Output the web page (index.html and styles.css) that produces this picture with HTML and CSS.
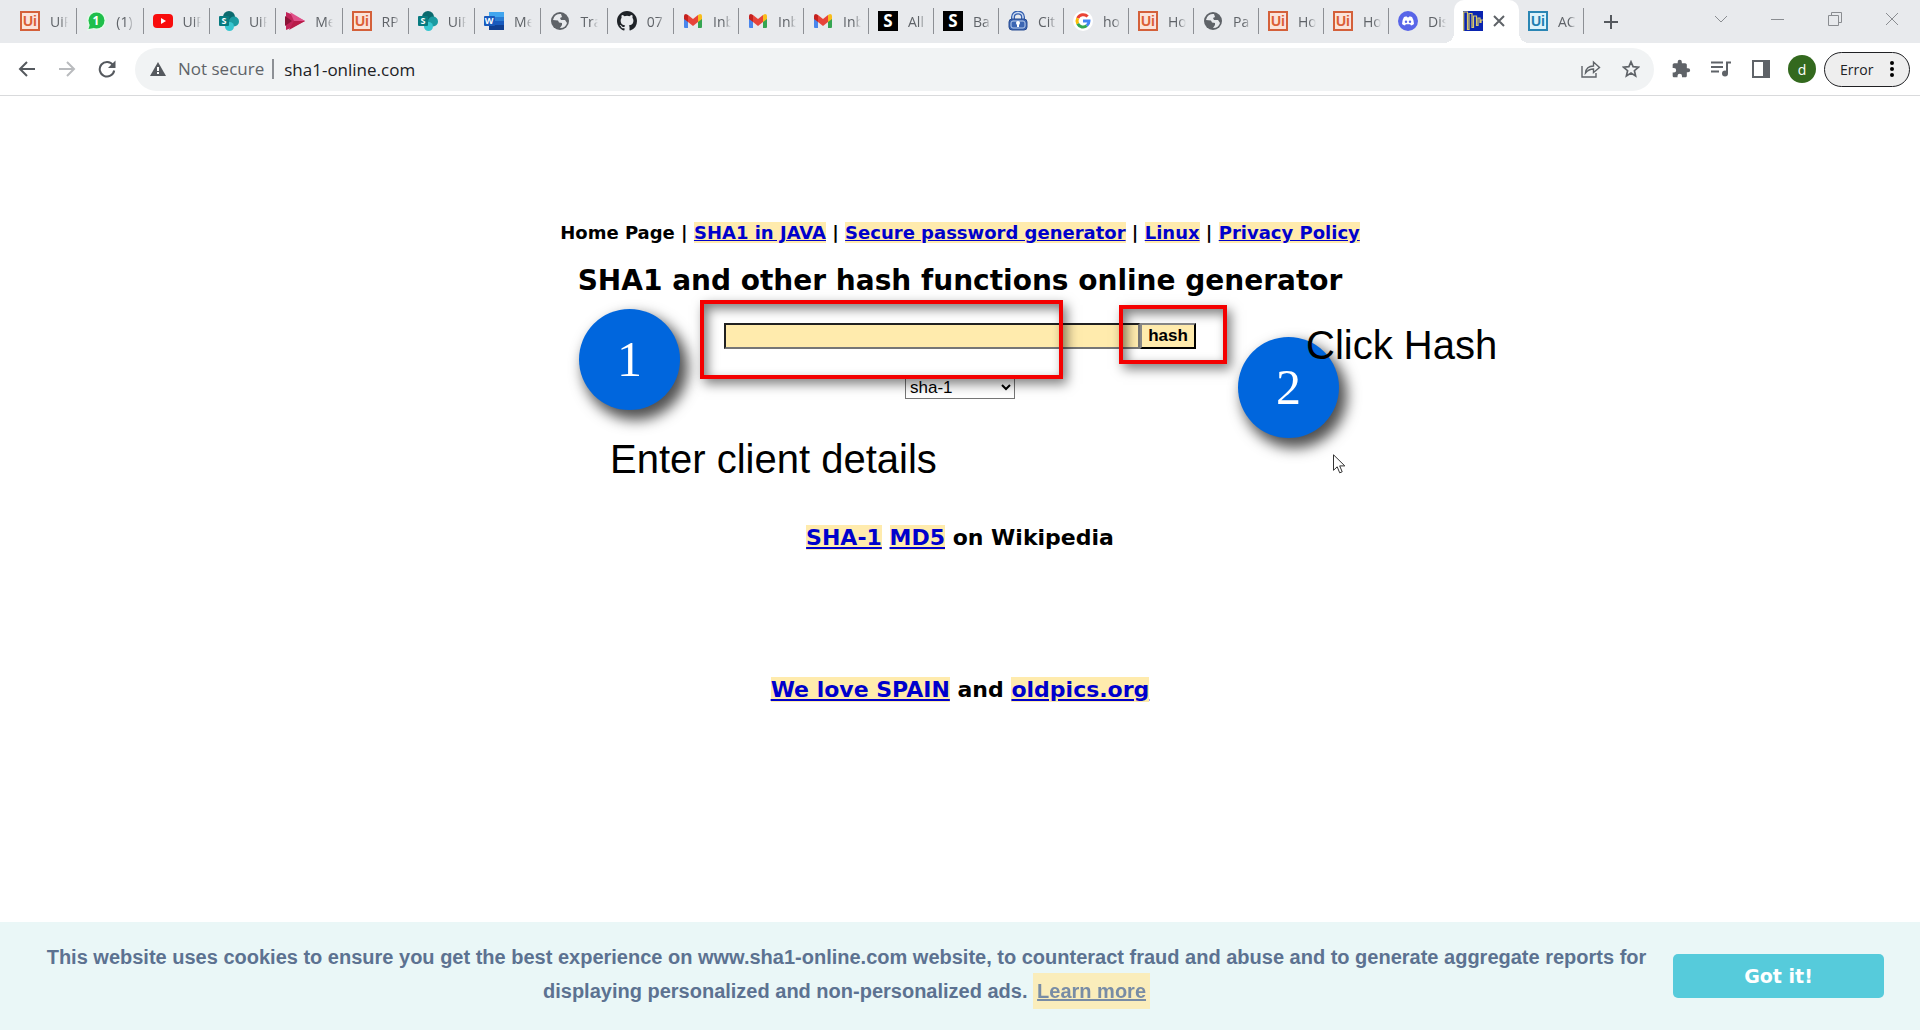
FILE: index.html
```html
<!DOCTYPE html>
<html lang="en">
<head>
<meta charset="utf-8">
<title>SHA1 and other hash functions online generator</title>
<link rel="stylesheet" href="styles.css">
</head>
<body>
<svg class="sprite" aria-hidden="true">
  <symbol id="uipath" viewBox="0 0 20 20"><rect width="20" height="20" fill="#d4603a"/><rect x="2" y="2" width="16" height="16" fill="#fbe3da"/><text x="10" y="15" text-anchor="middle" class="logo-ui" fill="#dc5f36">Ui</text></symbol>
  <symbol id="uipath-blue" viewBox="0 0 20 20"><rect width="20" height="20" fill="#2a86b4"/><rect x="2" y="2" width="16" height="16" fill="#dcf3fb"/><text x="10" y="15" text-anchor="middle" class="logo-ui" fill="#1f7fb0">Ui</text></symbol>
  <symbol id="whatsapp" viewBox="0 0 20 20"><circle cx="10.500" cy="9.500" r="9.500" fill="#e4fbe9"/><path d="M1 20l2-6 4 4z" fill="#e4fbe9"/><circle cx="10.500" cy="9.500" r="8" fill="#1fbf4b"/><path d="M2.500 18l1.500-5 4 4z" fill="#1fbf4b"/><text x="10" y="14" text-anchor="middle" class="logo-one" fill="#fff">1</text></symbol>
  <symbol id="youtube" viewBox="0 0 20 20"><rect y="3" width="20" height="14" rx="4" fill="#f80d0d"/><path d="M8 7l5 3-5 3z" fill="#fff"/></symbol>
  <symbol id="sharepoint" viewBox="0 0 20 20"><circle cx="10" cy="6" r="6" fill="#0b6a6e"/><circle cx="15" cy="10.500" r="5" fill="#1b9ba1"/><circle cx="10.500" cy="15.500" r="4.500" fill="#37c6d0"/><rect y="5" width="10" height="10" rx="1" fill="#087b80"/><text x="5" y="13" text-anchor="middle" class="logo-s" fill="#fff">S</text></symbol>
  <symbol id="stream" viewBox="0 0 20 20"><path d="M1 1l5 2 14 7-14 7-5 2z" fill="#c2245a"/><path d="M5 1l15 9H9z" fill="#e0518a"/><path d="M0 5l7 5-7 5z" fill="#8b1538"/><path d="M4 19l5-9h11z" fill="#b81c49"/></symbol>
  <symbol id="word" viewBox="0 0 20 20"><rect x="5" y="1" width="15" height="18" rx="1" fill="#2b7cd3"/><path d="M5 1h15v5H5z" fill="#41a5ee"/><path d="M5 10h15v4H5z" fill="#185abd"/><path d="M5 14h15v5H5z" fill="#103f91"/><rect y="5" width="11" height="10" rx="1" fill="#185abd"/><text x="5" y="13" text-anchor="middle" class="logo-s" fill="#fff">W</text></symbol>
  <symbol id="globe" viewBox="0 0 20 20"><circle cx="10" cy="10" r="9" fill="#5f6368"/><path d="M11 3a7 7 0 0 0-8 6l5 .500 1 2 3 .500v2l-2 3a7 7 0 0 0 7-5l-2-3h-4l-1-2 2-1z" fill="#e8eaed"/></symbol>
  <symbol id="github" viewBox="0 0 16 16"><path fill="#1f2328" d="M8 0C3.580 0 0 3.580 0 8c0 3.540 2.290 6.530 5.470 7.590.4.070.55-.17.55-.38 0-.19-.01-.82-.01-1.490-2.010.37-2.530-.49-2.690-.94-.09-.23-.48-.94-.82-1.130-.28-.15-.68-.52-.01-.53.63-.01 1.080.58 1.230.82.72 1.210 1.870.87 2.330.66.07-.52.28-.87.51-1.070-1.780-.2-3.640-.89-3.640-3.950 0-.87.31-1.590.82-2.150-.08-.2-.36-1.020.08-2.120 0 0 .67-.21 2.200.82a7.600 7.600 0 0 1 4 0c1.530-1.040 2.200-.82 2.200-.82.44 1.100.16 1.920.08 2.120.51.56.82 1.270.82 2.150 0 3.070-1.870 3.750-3.650 3.950.29.25.54.73.54 1.480 0 1.070-.01 1.930-.01 2.200 0 .21.15.46.55.38A8 8 0 0 0 16 8c0-4.420-3.580-8-8-8z"/></symbol>
  <symbol id="gmail" viewBox="0 0 20 20"><path d="M1 6h4v11H2q-1 0-1-1z" fill="#4a86ec"/><path d="M15 6h4v10q0 1-1 1h-3z" fill="#35a552"/><path d="M15 4l2-1q2 0 2 2v3l-4 3z" fill="#f8bd1c"/><path d="M1 5q0-2 2-2l2 1v7L1 8z" fill="#c5221f"/><path d="M5 4l5 4 5-4v7l-5 4-5-4z" fill="#e8443a"/></symbol>
  <symbol id="s-black" viewBox="0 0 20 20"><rect width="20" height="20" fill="#000"/><text x="10" y="16" text-anchor="middle" class="logo-big" fill="#fff">S</text></symbol>
  <symbol id="lock" viewBox="0 0 20 20"><path d="M5 9V6a5 4.500 0 0 1 10 0v3" fill="none" stroke="#355fae" stroke-width="4"/><path d="M5 9V6a5 4.500 0 0 1 10 0v3" fill="none" stroke="#cbdcf3" stroke-width="1.500"/><rect x="1" y="8" width="18" height="11" rx="3" fill="#3c66b3" stroke="#284c92"/><rect x="3" y="10" width="14" height="7" rx="2" fill="#3c66b3" stroke="#b9cdeb"/><circle cx="10" cy="12" r="2" fill="#fff"/><path d="M9 12h2v4H9z" fill="#fff"/></symbol>
  <symbol id="google" viewBox="0 0 20 20"><circle cx="10" cy="10" r="10" fill="#fff"/><g fill="none" stroke-width="3"><path d="M14.600 5.600A6 6 0 0 0 4.700 7.200" stroke="#ea4335"/><path d="M4.700 7.200a6 6 0 0 0 0 5.600" stroke="#fbbc05"/><path d="M4.700 12.800a6 6 0 0 0 9.100 1.900" stroke="#34a853"/><path d="M13.800 14.700A6 6 0 0 0 16 10h-6" stroke="#4285f4"/></g></symbol>
  <symbol id="discord" viewBox="0 0 20 20"><circle cx="10" cy="10" r="10" fill="#5865e8"/><path d="M6 6l2.500-.7.5 1h2l.5-1L14 6q2 3 2 7-1.500 1.300-3 1.500l-.8-1.200H7.800L7 14.500Q5.500 14.300 4 13q0-4 2-7z" fill="#fff"/><circle cx="8" cy="10.700" r="1.200" fill="#5865e8"/><circle cx="12" cy="10.700" r="1.200" fill="#5865e8"/></symbol>
  <symbol id="wave" viewBox="0 0 20 20"><rect width="20" height="20" fill="#0a24b0"/><path d="M.700 20V1h3.800v17.500H6V2.500h3v14h1.500V5h3v9.500H15V7h2v4.500h1V9h2" fill="none" stroke="#d8c86a" stroke-width="1.200"/></symbol>
</svg>

<header class="browser">
  <div class="tabstrip">
    <div class="tabs">
      <div class="tab"><svg class="favicon"><use href="#uipath"/></svg><span class="tab-title">UiP</span></div>
      <div class="tab"><svg class="favicon"><use href="#whatsapp"/></svg><span class="tab-title">(1)</span></div>
      <div class="tab"><svg class="favicon"><use href="#youtube"/></svg><span class="tab-title">UiP</span></div>
      <div class="tab"><svg class="favicon"><use href="#sharepoint"/></svg><span class="tab-title">UiP</span></div>
      <div class="tab"><svg class="favicon"><use href="#stream"/></svg><span class="tab-title">Me</span></div>
      <div class="tab"><svg class="favicon"><use href="#uipath"/></svg><span class="tab-title">RP</span></div>
      <div class="tab"><svg class="favicon"><use href="#sharepoint"/></svg><span class="tab-title">UiP</span></div>
      <div class="tab"><svg class="favicon"><use href="#word"/></svg><span class="tab-title">Me</span></div>
      <div class="tab"><svg class="favicon"><use href="#globe"/></svg><span class="tab-title">Tra</span></div>
      <div class="tab"><svg class="favicon"><use href="#github"/></svg><span class="tab-title">07</span></div>
      <div class="tab"><svg class="favicon"><use href="#gmail"/></svg><span class="tab-title">Inb</span></div>
      <div class="tab"><svg class="favicon"><use href="#gmail"/></svg><span class="tab-title">Inb</span></div>
      <div class="tab"><svg class="favicon"><use href="#gmail"/></svg><span class="tab-title">Inb</span></div>
      <div class="tab"><svg class="favicon"><use href="#s-black"/></svg><span class="tab-title">All</span></div>
      <div class="tab"><svg class="favicon"><use href="#s-black"/></svg><span class="tab-title">Ba</span></div>
      <div class="tab"><svg class="favicon"><use href="#lock"/></svg><span class="tab-title">Cit</span></div>
      <div class="tab"><svg class="favicon"><use href="#google"/></svg><span class="tab-title">ho</span></div>
      <div class="tab"><svg class="favicon"><use href="#uipath"/></svg><span class="tab-title">Ho</span></div>
      <div class="tab"><svg class="favicon"><use href="#globe"/></svg><span class="tab-title">Pa</span></div>
      <div class="tab"><svg class="favicon"><use href="#uipath"/></svg><span class="tab-title">Ho</span></div>
      <div class="tab"><svg class="favicon"><use href="#uipath"/></svg><span class="tab-title">Ho</span></div>
      <div class="tab tab-last"><svg class="favicon"><use href="#discord"/></svg><span class="tab-title">Dis</span></div>
      <div class="tab tab-active"><svg class="favicon"><use href="#wave"/></svg><button class="icon-button tab-close" aria-label="Close tab"><svg width="12" height="12" viewBox="0 0 12 12"><path d="M1 1l10 10M11 1L1 11" stroke="#5f6368" stroke-width="2"/></svg></button></div>
      <div class="tab"><svg class="favicon"><use href="#uipath-blue"/></svg><span class="tab-title">AC</span></div>
    </div>
    <button class="icon-button new-tab" aria-label="New tab"><svg width="16" height="16" viewBox="0 0 16 16"><path d="M8 1v14M1 8h14" stroke="#55595e" stroke-width="2"/></svg></button>
    <div class="window-controls">
      <button class="icon-button window-button" aria-label="Search tabs"><svg width="14" height="8" viewBox="0 0 14 8"><path d="M1 1l6 6 6-6" fill="none" stroke="#8a8d91"/></svg></button>
      <button class="icon-button window-button" aria-label="Minimize"><svg width="14" height="14" viewBox="0 0 14 14"><path d="M0 7.500h13" stroke="#8a8d91"/></svg></button>
      <button class="icon-button window-button" aria-label="Restore"><svg width="14" height="14" viewBox="0 0 14 14"><path d="M.5 3.500h10v10H.5zM3.500 3V.5h10v10H11" fill="none" stroke="#8a8d91"/></svg></button>
      <button class="icon-button window-button" aria-label="Close"><svg width="14" height="14" viewBox="0 0 14 14"><path d="M1 1l12 12M13 1L1 13" stroke="#8a8d91"/></svg></button>
    </div>
  </div>
  <div class="toolbar">
    <button class="icon-button tool" aria-label="Back"><svg width="18" height="16" viewBox="0 0 18 16"><path d="M17 8H2M9 1L2 8l7 7" fill="none" stroke="#55595e" stroke-width="2"/></svg></button>
    <button class="icon-button tool" aria-label="Forward"><svg width="18" height="16" viewBox="0 0 18 16"><path d="M1 8h15M9 1l7 7-7 7" fill="none" stroke="#b9bbbe" stroke-width="2"/></svg></button>
    <button class="icon-button tool" aria-label="Reload"><svg width="18" height="18" viewBox="0 0 18 18"><path d="M15 5a7.300 7.300 0 1 0 1.200 5.500" fill="none" stroke="#55595e" stroke-width="2"/><path d="M17.500.5V8H10z" fill="#55595e"/></svg></button>
    <div class="omnibox">
      <svg width="16" height="14" viewBox="0 0 16 14"><path d="M8 0l8 14H0z" fill="#55595e"/><path d="M8 5v4M8 10v2" stroke="#fff" stroke-width="2"/></svg>
      <span class="security">Not secure</span>
      <input class="address" type="text" aria-label="Address" value="sha1-online.com">
      <button class="icon-button tool" aria-label="Share"><svg width="20" height="18" viewBox="0 0 20 18"><path d="M1 6v11h14v-4M4.500 13C5 8.500 8 6 12.500 6V2l6 5.500-6 5v-3.500C9 9 6.500 10.500 4.500 13z" fill="none" stroke="#5f6368" stroke-width="1.400"/></svg></button>
      <button class="icon-button tool" aria-label="Bookmark"><svg width="18" height="18" viewBox="0 0 18 18"><path d="M9 1.800l2.100 4.900 5.300.5-4 3.500 1.200 5.200L9 13.100l-4.600 2.800 1.200-5.200-4-3.500 5.300-.5z" fill="none" stroke="#5f6368" stroke-width="1.700"/></svg></button>
    </div>
    <button class="icon-button tool" aria-label="Extensions"><svg width="20" height="20" viewBox="0 0 24 24"><path fill="#5f6368" d="M20.500 11H19V7c0-1.100-.9-2-2-2h-4V3.500a2.500 2.500 0 0 0-5 0V5H4c-1.100 0-2 .9-2 2v3.800h1.500a2.700 2.700 0 0 1 0 5.400H2V20c0 1.100.9 2 2 2h3.800v-1.500a2.700 2.700 0 0 1 5.400 0V22H17c1.100 0 2-.9 2-2v-4h1.500a2.500 2.500 0 0 0 0-5z"/></svg></button>
    <button class="icon-button tool" aria-label="Media"><svg width="20" height="16" viewBox="0 0 20 16"><path d="M0 1.500h12M0 6h12M0 10.500h8" stroke="#5f6368" stroke-width="2"/><path d="M16 12V1.500h4" fill="none" stroke="#5f6368" stroke-width="2"/><circle cx="14" cy="12.500" r="3" fill="#5f6368"/></svg></button>
    <button class="icon-button tool" aria-label="Side panel"><svg width="18" height="18" viewBox="0 0 18 18"><path d="M0 0h18v18H0zM2 2v14h9V2z" fill="#5f6368" fill-rule="evenodd"/></svg></button>
    <button class="avatar" aria-label="Profile">d</button>
    <button class="error-chip">Error<svg width="4" height="18" viewBox="0 0 4 18"><circle cx="2" cy="3" r="2"/><circle cx="2" cy="9" r="2"/><circle cx="2" cy="15" r="2"/></svg></button>
  </div>
</header>

<main class="page">
  <nav class="site-nav">Home Page | <a href="#">SHA1 in JAVA</a> | <a href="#">Secure password generator</a> | <a href="#">Linux</a> | <a href="#">Privacy Policy</a></nav>
  <h1 class="title">SHA1 and other hash functions online generator</h1>
  <form class="hash-form">
    <div class="hash-row"><input class="hash-input" type="text" aria-label="Text to hash"><button class="hash-button" type="button">hash</button></div>
    <select class="hash-type" aria-label="Hash function"><option>sha-1</option></select>
  </form>
  <p class="links"><a href="#">SHA-1</a> <a href="#">MD5</a> on Wikipedia</p>
  <p class="links"><a href="#">We love SPAIN</a> and <a href="#">oldpics.org</a></p>

  <div class="step step-one">1</div>
  <div class="frame frame-input"></div>
  <div class="note note-one">Enter client details</div>
  <div class="frame frame-button"></div>
  <div class="step step-two">2</div>
  <div class="note note-two">Click Hash</div>
  <svg class="pointer" width="13" height="20" viewBox="0 0 13 20" aria-hidden="true"><path d="M.5.800v15.500l3.700-3.500 2.500 6 2.500-1-2.500-5.900h5.100z" fill="#fff" stroke="#333"/></svg>
</main>

<footer class="cookies">
  <p class="cookie-text">This website uses cookies to ensure you get the best experience on www.sha1-online.com website, to counteract fraud and abuse and to generate aggregate reports for displaying personalized and non-personalized ads. <a class="cookie-link" href="#">Learn more</a></p>
  <button class="cookie-button">Got it!</button>
</footer>
</body>
</html>
```
FILE: styles.css
```css
* { box-sizing: border-box; }

body {
  margin: 0;
  min-height: 100vh;
  display: flex;
  flex-direction: column;
  background: #fff;
  color: #000;
  font-family: "DejaVu Sans", Verdana, sans-serif;
  overflow-x: hidden;
}

.sprite { position: absolute; width: 0; height: 0; }
.logo-ui { font: bold 14px "Liberation Sans", sans-serif; }
.logo-one { font: bold 12px "Open Sans", sans-serif; }
.logo-s { font: bold 9px "Open Sans", sans-serif; }
.logo-big { font: bold 17px "Open Sans", sans-serif; }

/* Browser chrome */
.browser { font-family: "Open Sans", "Segoe UI", sans-serif; }
.icon-button {
  display: flex;
  align-items: center;
  justify-content: center;
  padding: 0;
  border: 0;
  background: none;
}
.tabstrip { display: flex; height: 43px; background: #e8eaed; padding-left: 11px; }
.tabs {
  display: grid;
  flex: none;
  width: 1573px;
  grid-template-columns: repeat(10, 1fr) repeat(14, 65px);
}
.tab {
  position: relative;
  display: flex;
  align-items: center;
  gap: 10px;
  padding: 0 0 1px 9px;
  min-width: 0;
}
.tab::after {
  content: "";
  width: 1px;
  height: 26px;
  margin-left: auto;
  background: #8d9095;
}
.tab-last::after, .tab-active::after { display: none; }
.favicon { width: 20px; height: 20px; flex: none; }
.tab-title {
  width: 18px;
  margin-right: -10px;
  overflow: hidden;
  white-space: nowrap;
  font-size: 14px;
  color: #5f6368;
  mask-image: linear-gradient(to right, #000 60%, transparent);
}
.tab-active { background: #fff; border-radius: 10px 10px 0 0; }
.tab-active::before {
  content: "";
  position: absolute;
  bottom: 0;
  left: -10px;
  right: -10px;
  height: 10px;
  background:
    radial-gradient(circle at 0 0, transparent 10px, #fff 10px) left / 10px 10px no-repeat,
    radial-gradient(circle at 100% 0, transparent 10px, #fff 10px) right / 10px 10px no-repeat;
}
.new-tab { width: 54px; }
.window-controls { display: flex; margin-left: auto; height: 37px; }
.window-button { width: 57px; }

.toolbar {
  display: flex;
  align-items: center;
  height: 53px;
  padding: 0 10px 0 7px;
  background: #fff;
  border-bottom: 1px solid #d9dadc;
}
.tool { width: 40px; height: 40px; flex: none; }
.omnibox {
  flex: 1;
  display: flex;
  align-items: center;
  height: 43px;
  margin: 0 7px 0 8px;
  padding: 0 3px 0 15px;
  border-radius: 22px;
  background: #f1f3f4;
  font-size: 17px;
}
.security {
  margin-left: 12px;
  padding-right: 8px;
  border-right: 2px solid #8d9095;
  line-height: 20px;
  color: #5f6368;
}
.address {
  flex: 1;
  margin-left: 10px;
  padding: 0;
  border: 0;
  background: none;
  font: inherit;
  color: #202124;
}
.avatar {
  width: 28px;
  height: 28px;
  margin: 0 8px 0 7px;
  padding: 0;
  border: 0;
  border-radius: 50%;
  background: #33691e;
  color: #fff;
  font: 14px "Open Sans", sans-serif;
}
.error-chip {
  display: flex;
  align-items: center;
  justify-content: space-between;
  width: 86px;
  height: 35px;
  padding: 0 15px;
  border: 1px solid #202124;
  border-radius: 18px;
  background: #eee;
  color: #202124;
  font: 14px "Open Sans", sans-serif;
}

/* Site */
.page {
  position: relative;
  flex: 1;
  display: flex;
  flex-direction: column;
  align-items: center;
  padding-top: 126px;
  font-weight: bold;
  white-space: nowrap;
}
.page a { color: #00c; background: #ffebad; }
.site-nav { font-size: 18px; line-height: 22px; }
.title { margin: 19px 0 0; font-size: 28px; line-height: 36px; }
.hash-form { display: flex; flex-direction: column; align-items: center; margin-top: 24px; }
.hash-row { display: flex; }
.hash-input {
  width: 416px;
  height: 26px;
  border: 2px inset #767676;
  background: #ffebad;
  font: 16px "Liberation Sans", Arial, sans-serif;
}
.hash-button {
  width: 56px;
  height: 26px;
  padding: 0;
  border: 2px outset #333;
  background: #ffebad;
  color: #000;
  font: bold 17px "Liberation Sans", Arial, sans-serif;
}
.hash-type {
  width: 110px;
  height: 23px;
  margin-top: 27px;
  border: 1px solid #767676;
  background: #fff;
  color: #000;
  font: 17px "Liberation Sans", Arial, sans-serif;
}
.links { margin: 126px 0 0; font-size: 22px; line-height: 26px; }

/* Walkthrough marks drawn over the site */
.step, .frame, .note, .pointer { position: absolute; left: 50%; }
.step {
  width: 101px;
  height: 101px;
  border-radius: 50%;
  background: #0066dd;
  color: #fff;
  text-align: center;
  font: 50px/101px "Liberation Serif", "Times New Roman", serif;
  box-shadow: 6px 8px 14px 2px #000000b0;
}
.step-one { top: 213px; margin-left: -381px; }
.step-two { top: 241px; margin-left: 278px; }
.frame {
  border: 4px solid #f40000;
  box-shadow: 4px 5px 11px #00000080, inset 4px 5px 11px #00000080;
}
.frame-input { top: 204px; margin-left: -260px; width: 363px; height: 79px; }
.frame-button { top: 209px; margin-left: 159px; width: 108px; height: 59px; }
.note { font: 40px/46px "Liberation Sans", Arial, sans-serif; }
.note-one { top: 340px; margin-left: -350px; }
.note-two { top: 226px; margin-left: 346px; }
.pointer { top: 358px; margin-left: 373px; }

/* Cookie banner */
.cookies {
  display: flex;
  align-items: center;
  gap: 16px;
  padding: 18px 36px;
  background: #eaf7f7;
  color: #5c7291;
  font: bold 20px/34px "Liberation Sans", Helvetica, Arial, sans-serif;
}
.cookie-text { flex: 1; margin: 0; padding-bottom: 4px; text-align: center; }
.cookie-link { padding: 7px 4px; color: inherit; background: #ffebad; opacity: 0.8; }
.cookie-button {
  flex: none;
  width: 211px;
  height: 44px;
  border: 0;
  border-radius: 5px;
  background: #56cbdb;
  color: #fff;
  font: bold 19px "DejaVu Sans", Verdana, sans-serif;
}
```
